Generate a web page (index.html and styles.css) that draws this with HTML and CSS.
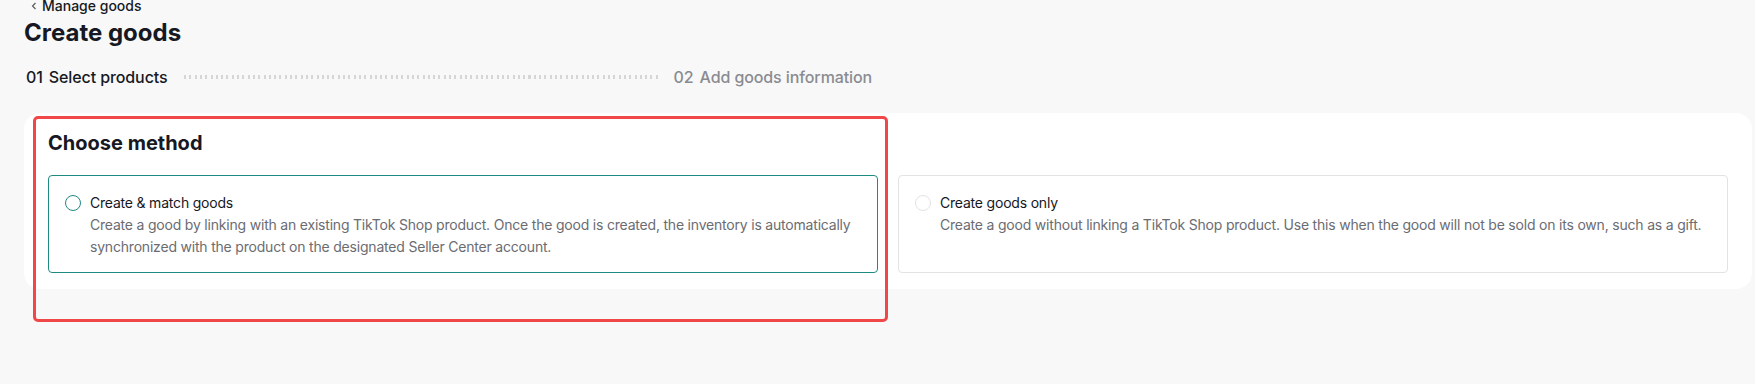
FILE: index.html
```html
<!DOCTYPE html>
<html lang="en">
<head>
  <meta charset="UTF-8">
  <title>Create goods</title>
  <meta name="viewport" content="width=device-width, initial-scale=1.0">
  <link rel="stylesheet" href="styles.css">
</head>
<body>

  <div class="page">
    <a class="back" href="#">
      <svg class="back-icon" width="12" height="12" viewBox="0 0 12 12">
        <path d="M7.5 3 L4.5 6 L7.5 9" fill="none" stroke="#555" stroke-width="1.1"/>
      </svg>
      Manage goods
    </a>

    <h1>Create goods</h1>

    <div class="steps">
      <div class="step active"><span>01</span><span>Select products</span></div>
      <div class="step-line"></div>
      <div class="step"><span>02</span><span>Add goods information</span></div>
    </div>

    <div class="card-wrap">
      <div class="card">
        <h2>Choose method</h2>

        <div class="methods">
          <label class="method selected">
            <span class="radio"></span>
            <span class="method-text">
              <span class="method-title">Create &amp; match goods</span>
              <span class="method-desc">Create a good by linking with an existing TikTok Shop product. Once the good is created, the inventory is automatically synchronized with the product on the designated Seller Center account.</span>
            </span>
          </label>

          <label class="method">
            <span class="radio"></span>
            <span class="method-text">
              <span class="method-title">Create goods only</span>
              <span class="method-desc">Create a good without linking a TikTok Shop product. Use this when the good will not be sold on its own, such as a gift.</span>
            </span>
          </label>
        </div>
      </div>

      <!-- annotation frame drawn over the first half of the card -->
      <div class="highlight"></div>
    </div>
  </div>

</body>
</html>
```

FILE: styles.css
```css
* {
  box-sizing: border-box;
}

html, body {
  min-height: 100%;
}

body {
  margin: 0;
  min-height: 100vh;
  font-family: Inter, "Noto Sans", Arial, sans-serif;
  background-color: #f8f8f8;
  color: #161823;
}

.page {
  padding: 0 3px 60px 24px;
}

.back {
  display: flex;
  align-items: center;
  gap: 2px;
  margin-top: -4px;
  padding-left: 4px;
  font-size: 14px;
  line-height: 20px;
  font-weight: 500;
  color: #161823;
  text-decoration: none;
}

h1 {
  margin: 1px 0 0;
  font-size: 24px;
  line-height: 32px;
  font-weight: 700;
}

.steps {
  display: flex;
  align-items: center;
  gap: 16px;
  margin-top: 17px;
  padding-left: 2px;
  font-size: 16px;
  line-height: 22px;
  font-weight: 500;
  letter-spacing: -0.1px;
}

.step {
  display: flex;
  gap: 6px;
  color: #8a8b91;
}

.step.active {
  color: #161823;
}

.step-line {
  width: 474px;
  height: 4px;
  background: repeating-linear-gradient(90deg, #d6d6d6 0 2px, transparent 2px 5.3px);
}

.card-wrap {
  position: relative;
  margin-top: 25px;
}

.card {
  padding: 16px 24px 16px;
  background: #fff;
  border-radius: 16px;
}

h2 {
  margin: 0;
  font-size: 20px;
  line-height: 28px;
  font-weight: 700;
}

.methods {
  display: grid;
  grid-template-columns: 1fr 1fr;
  gap: 20px;
  margin-top: 18px;
}

.method {
  display: flex;
  align-items: flex-start;
  gap: 9px;
  padding: 16px 16px 14px;
  border: 1px solid #e3e3e4;
  border-radius: 4px;
  font-size: 14px;
  line-height: 22px;
  letter-spacing: -0.2px;
  cursor: pointer;
}

.method.selected {
  border-color: #1f8a82;
}

.radio {
  flex: none;
  width: 16px;
  height: 16px;
  margin-top: 3px;
  border: 1px solid #e3e3e4;
  border-radius: 50%;
}

.selected .radio {
  border-color: #1f8a82;
  border-width: 1.5px;
}

.method-text {
  display: flex;
  flex-direction: column;
}

.method-title {
  color: #161823;
}

.method-desc {
  color: #6b6c72;
}

.highlight {
  position: absolute;
  z-index: 1;
  left: 9px;
  top: 3px;
  width: 855px;
  height: 206px;
  border: 3px solid #f04848;
  border-radius: 5px;
  pointer-events: none;
}
```
